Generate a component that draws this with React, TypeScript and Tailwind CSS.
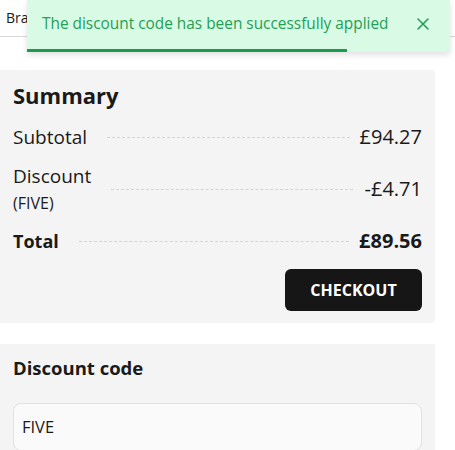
import React from 'react';

const Dots: React.FC<{ className?: string }> = ({ className = '' }) => (
  <div className={`flex-1 border-t border-dashed border-[#d4d4d4] ${className}`} />
);

const App: React.FC = () => {
  return (
    <div className="relative min-h-screen bg-white font-['Open_Sans','Liberation_Sans',sans-serif] text-[#1a1a1a]">
      {/* header, mostly hidden by toast */}
      <div className="h-[37px] border-b border-[#d8d8d8] px-1.5 pt-[7px] text-[14px]">Brand</div>

      {/* toast */}
      <div className="absolute left-[27px] top-0 w-[423px] h-[52px] bg-[#d9fae4] shadow-[0_3px_6px_rgba(0,0,0,0.12)] flex items-center pl-[15px] pr-[20px] pb-1">
        <span className="flex-1 text-[15.4px] text-[#22a055]">The discount code has been successfully applied</span>
        <svg width="14" height="14" viewBox="0 0 14 14" className="text-[#22a055]">
          <path d="M2 2L12 12M12 2L2 12" stroke="currentColor" strokeWidth="1.6" strokeLinecap="round" />
        </svg>
        <div className="absolute left-0 bottom-0 h-[3px] w-[320px] bg-[#1c9a4e]" />
      </div>

      <div className="pt-[33px] w-[435px]">
        {/* summary card */}
        <div className="bg-[#f4f4f4] px-[13px] pt-[10px] pb-[12px] rounded-r-sm">
          <h2 className="text-[22px] font-bold leading-[30px]">Summary</h2>

          <div className="mt-[13px] flex items-center h-[28px] text-[19px]">
            <span>Subtotal</span>
            <Dots className="ml-5 mr-2.5" />
            <span className="text-right text-[20px]">£94.27</span>
          </div>

          <div className="mt-[11px] flex items-center text-[19px]">
            <div className="flex flex-col">
              <span className="leading-[28px]">Discount</span>
              <span className="text-[16px] leading-[26px]">(FIVE)</span>
            </div>
            <Dots className="ml-5 mr-3" />
            <span className="text-right text-[20px]">-£4.71</span>
          </div>

          <div className="mt-[11px] flex items-center h-[28px] text-[18px] font-bold">
            <span>Total</span>
            <Dots className="ml-5 mr-2.5" />
            <span className="text-right text-[20px]">£89.56</span>
          </div>

          <div className="mt-[14px] flex justify-end">
            <button className="w-[137px] h-[42px] rounded-md bg-[#161616] text-white text-[16px] font-bold">
              CHECKOUT
            </button>
          </div>
        </div>

        {/* discount code card */}
        <div className="mt-[21px] bg-[#f4f4f4] px-[13px] pt-[12px] pb-4">
          <h3 className="text-[18.5px] font-bold leading-[24px]">Discount code</h3>
          <div className="mt-[23px] h-[48px] rounded-lg border border-[#e2e2e2] bg-[#fafafa] px-[8px] flex items-center text-[16.5px]">
            FIVE
          </div>
        </div>
      </div>
    </div>
  );
};

export default App;
